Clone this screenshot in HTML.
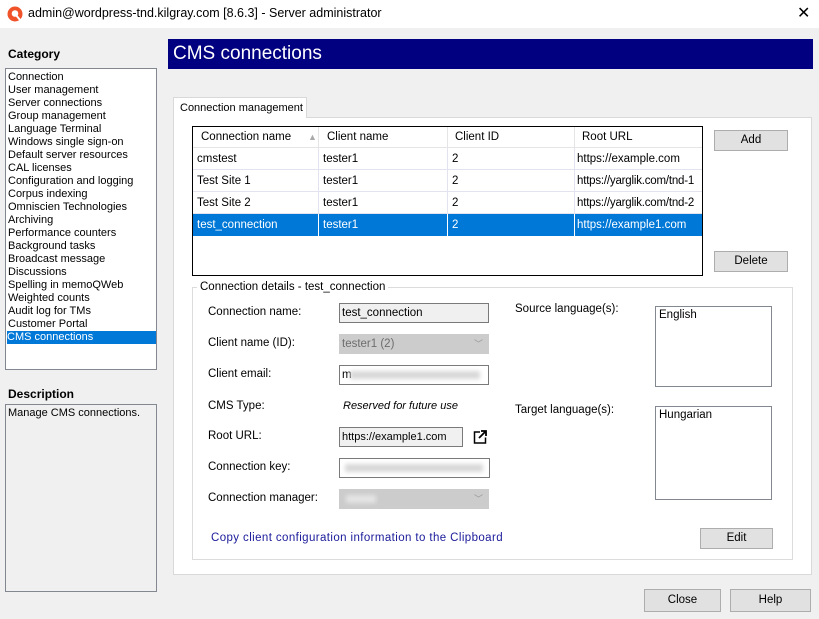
<!DOCTYPE html>
<html><head><style>
*{box-sizing:border-box;margin:0;padding:0}
body{width:819px;height:619px;background:#f0f0f0;font-family:"Liberation Sans",sans-serif;font-size:11.5px;color:#000;position:relative;overflow:hidden}
.a{position:absolute;white-space:nowrap}
.btn{position:absolute;background:#e1e1e1;border:1px solid #adadad;text-align:center;line-height:19px;font-size:11.5px}
.inp{position:absolute;height:20px;border:1px solid #7a7a7a;background:#f0f0f0;padding-left:2px;line-height:18px;white-space:nowrap;overflow:hidden}
.dis{border-color:#ccc;background:#ccc;color:#6d6d6d}
.lbl{position:absolute;left:208px;white-space:nowrap}
.blur{position:absolute;top:5px;height:8px;background:#d8d8d8;filter:blur(2px)}
.cell{position:absolute;height:22px;line-height:22px;padding-left:4px;border-right:1px solid #e3e3f0;white-space:nowrap;overflow:hidden}
</style></head><body>
<div class="a" style="left:0;top:0;width:819px;height:28px;background:#fff"></div>
<svg class="a" style="left:7px;top:6px" width="16" height="16"><circle cx="8" cy="8" r="7.5" fill="#f0532a"/><circle cx="8" cy="7.5" r="3.3" fill="#fff"/><path d="M9 9 L13 14" stroke="#fff" stroke-width="2"/></svg>
<div class="a" style="left:28px;top:6px;font-size:12.5px">admin@wordpress-tnd.kilgray.com [8.6.3] - Server administrator</div>
<div class="a" style="left:797px;top:3px;font-size:16px">✕</div>

<div class="a" style="left:8px;top:47px;font-weight:bold;font-size:12px">Category</div>
<div class="a" style="left:5px;top:68px;width:152px;height:302px;background:#fff;border:1px solid #828790;padding:2px 0 0 2px;line-height:13px;font-size:11px">
Connection<br>User management<br>Server connections<br>Group management<br>Language Terminal<br>Windows single sign-on<br>Default server resources<br>CAL licenses<br>Configuration and logging<br>Corpus indexing<br>Omniscien Technologies<br>Archiving<br>Performance counters<br>Background tasks<br>Broadcast message<br>Discussions<br>Spelling in memoQWeb<br>Weighted counts<br>Audit log for TMs<br>Customer Portal<br><div style="background:#0078d7;color:#fff;margin-left:-1px;width:149px">CMS connections</div></div>
<div class="a" style="left:8px;top:387px;font-weight:bold;font-size:12px">Description</div>
<div class="a" style="left:5px;top:404px;width:152px;height:188px;border:1px solid #828790;padding:2px;font-size:11px">Manage CMS connections.</div>

<div class="a" style="left:168px;top:39px;width:645px;height:30px;background:#000080;color:#fff;font-size:19px;padding:4px 0 0 5px">CMS connections</div>

<div class="a" style="left:173px;top:117px;width:639px;height:458px;background:#fff;border:1px solid #d9d9d9"></div>
<div class="a" style="left:173px;top:97px;width:134px;height:21px;background:#fff;border:1px solid #d9d9d9;border-bottom:none;padding:4px 0 0 6px;font-size:11px">Connection management</div>

<div class="a" style="left:192px;top:126px;width:511px;height:150px;border:1px solid #000;background:#fff">
 <div class="a" style="left:0;top:0;width:509px;height:21px;border-bottom:1px solid #e5e5e5"></div>
 <div class="a" style="left:8px;top:4px">Connection name</div><div class="a" style="left:115px;top:5px;color:#aaa;font-size:9px">▲</div>
 <div class="a" style="left:125px;top:0;width:1px;height:21px;background:#e5e5e5"></div>
 <div class="a" style="left:134px;top:4px">Client name</div>
 <div class="a" style="left:254px;top:0;width:1px;height:21px;background:#e5e5e5"></div>
 <div class="a" style="left:262px;top:4px">Client ID</div>
 <div class="a" style="left:381px;top:0;width:1px;height:21px;background:#e5e5e5"></div>
 <div class="a" style="left:389px;top:4px">Root URL</div>
 <div class="a" style="left:0;top:21px;width:509px">
  <div style="position:relative;height:22px;border-bottom:1px solid #e3e3f0"><span class="cell" style="left:0;width:126px">cmstest</span><span class="cell" style="left:126px;width:129px">tester1</span><span class="cell" style="left:255px;width:127px">2</span><span class="cell" style="left:382px;width:127px;border:none;padding-left:2px">https://example.com</span></div>
  <div style="position:relative;height:22px;border-bottom:1px solid #e3e3f0"><span class="cell" style="left:0;width:126px">Test Site 1</span><span class="cell" style="left:126px;width:129px">tester1</span><span class="cell" style="left:255px;width:127px">2</span><span class="cell" style="left:382px;width:127px;border:none;padding-left:2px;letter-spacing:-0.2px">https://yarglik.com/tnd-1</span></div>
  <div style="position:relative;height:22px;border-bottom:1px solid #e3e3f0"><span class="cell" style="left:0;width:126px">Test Site 2</span><span class="cell" style="left:126px;width:129px">tester1</span><span class="cell" style="left:255px;width:127px">2</span><span class="cell" style="left:382px;width:127px;border:none;padding-left:2px;letter-spacing:-0.2px">https://yarglik.com/tnd-2</span></div>
  <div style="position:relative;height:22px;background:#0078d7;color:#fff"><span class="cell" style="left:0;width:126px;border-color:#fff">test_connection</span><span class="cell" style="left:126px;width:129px;border-color:#fff">tester1</span><span class="cell" style="left:255px;width:127px;border-color:#fff">2</span><span class="cell" style="left:382px;width:127px;border:none;padding-left:2px">https://example1.com</span></div>
 </div>
</div>
<div class="btn" style="left:714px;top:130px;width:74px;height:21px">Add</div>
<div class="btn" style="left:714px;top:251px;width:74px;height:21px">Delete</div>

<div class="a" style="left:192px;top:287px;width:601px;height:273px;border:1px solid #dcdcdc"></div>
<div class="a" style="left:197px;top:281px;background:#fff;padding:0 3px">Connection details - test_connection</div>
<div class="lbl" style="top:306px">Connection name:</div>
<div class="inp" style="left:339px;top:303px;width:150px">test_connection</div>
<div class="lbl" style="top:337px">Client name (ID):</div>
<div class="inp dis" style="left:339px;top:334px;width:150px">tester1 (2)<span style="position:absolute;right:5px;color:#999;font-size:9px">﹀</span></div>
<div class="lbl" style="top:368px">Client email:</div>
<div class="inp" style="left:339px;top:365px;width:150px;background:#fff">m<div class="blur" style="left:10px;width:130px"></div></div>
<div class="lbl" style="top:400px">CMS Type:</div>
<div class="a" style="left:343px;top:400px;font-style:italic;font-size:11px">Reserved for future use</div>
<div class="lbl" style="top:430px">Root URL:</div>
<div class="inp" style="left:339px;top:427px;width:124px;font-size:11px">https://example1.com</div>
<svg class="a" style="left:472px;top:429px" width="16" height="16"><path d="M8 3H2.5V14H13.5V8.5" fill="none" stroke="#000" stroke-width="1.5"/><path d="M7 9L14 2M9 2H14V7" fill="none" stroke="#000" stroke-width="1.8"/></svg>
<div class="lbl" style="top:461px">Connection key:</div>
<div class="inp" style="left:339px;top:458px;width:151px;background:#fff"><div class="blur" style="left:5px;width:138px"></div></div>
<div class="lbl" style="top:492px">Connection manager:</div>
<div class="inp dis" style="left:339px;top:489px;width:150px"><div class="blur" style="left:6px;width:30px;background:#e4e4e4"></div><span style="position:absolute;right:5px;color:#999;font-size:9px">﹀</span></div>

<div class="a" style="left:515px;top:303px">Source language(s):</div>
<div class="a" style="left:655px;top:306px;width:117px;height:81px;border:1px solid #828790;padding:2px 3px">English</div>
<div class="a" style="left:515px;top:404px">Target language(s):</div>
<div class="a" style="left:655px;top:406px;width:117px;height:94px;border:1px solid #828790;padding:2px 3px">Hungarian</div>

<div class="a" style="left:211px;top:532px;color:#1a1a9a;letter-spacing:0.4px">Copy client configuration information to the Clipboard</div>
<div class="btn" style="left:700px;top:528px;width:73px;height:21px">Edit</div>

<div class="btn" style="left:644px;top:589px;width:77px;height:23px;line-height:21px">Close</div>
<div class="btn" style="left:730px;top:589px;width:81px;height:23px;line-height:21px">Help</div>
</body></html>
